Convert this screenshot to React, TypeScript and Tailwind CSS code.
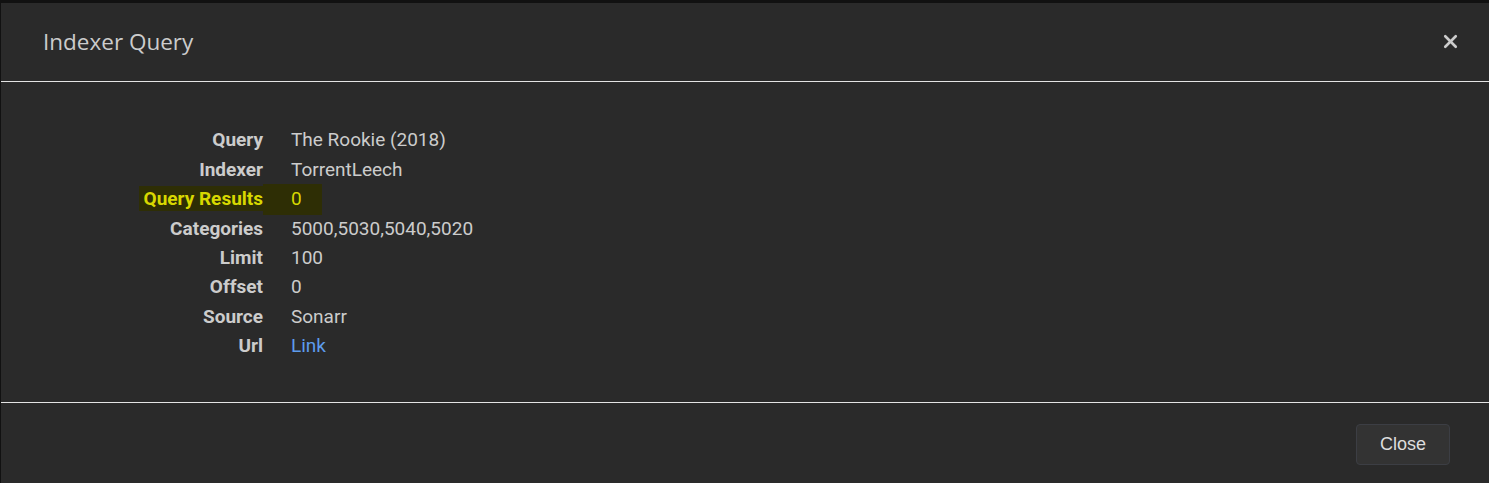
import { X } from "lucide-react";

const rows: { label: string; value: string; highlight?: boolean; link?: boolean }[] = [
  { label: "Query", value: "The Rookie (2018)" },
  { label: "Indexer", value: "TorrentLeech" },
  { label: "Query Results", value: "0", highlight: true },
  { label: "Categories", value: "5000,5030,5040,5020" },
  { label: "Limit", value: "100" },
  { label: "Offset", value: "0" },
  { label: "Source", value: "Sonarr" },
  { label: "Url", value: "Link", link: true },
];

export default function App() {
  return (
    <div className="w-[1489px] h-[483px] bg-[#111111] pt-[3px] pl-[1px] overflow-hidden">
      <div className="h-full bg-[#2a2a2a] flex flex-col">
        <header className="h-[79px] flex items-center justify-between pl-[42px] pr-[28px] border-b border-[#e4e4e4] shrink-0">
          <h1 className="text-[22.5px] text-[#cccccc] font-['Open_Sans',sans-serif] pb-[1px]">Indexer Query</h1>
          <button className="text-[#cccccc] mb-[1px]">
            <X size={21} strokeWidth={3} />
          </button>
        </header>
        <div className="h-[320px] pt-[44px] font-['Roboto',sans-serif] text-[19px] shrink-0">
          {rows.map((r) => (
            <div key={r.label} className="flex h-[29.4px] items-center">
              <div
                className={
                  r.highlight
                    ? "w-[262px] text-right font-bold text-[#d8d800]"
                    : "w-[262px] text-right font-bold text-[#cccccc]"
                }
              >
                {r.highlight ? (
                  <span className="bg-[#2e2e05] pl-[5px] py-[1px]">{r.label}</span>
                ) : (
                  r.label
                )}
              </div>
              <div
                className={
                  r.highlight
                    ? "pl-[28px] pr-[20px] text-[#d8d800] bg-[#2e2e05] py-[1px]"
                    : r.link
                    ? "pl-[28px] text-[#5d9cec]"
                    : "pl-[28px] text-[#cccccc]"
                }
              >
                {r.value}
              </div>
            </div>
          ))}
        </div>
        <footer className="flex-1 border-t border-[#e4e4e4] flex items-center justify-end pr-[39px]">
          <button className="h-[41px] w-[94px] rounded-[4px] bg-[#333333] border border-[#3c3e44] text-[18px] text-[#dddddd] font-['Liberation_Sans',sans-serif] mt-[2px]">
            Close
          </button>
        </footer>
      </div>
    </div>
  );
}
